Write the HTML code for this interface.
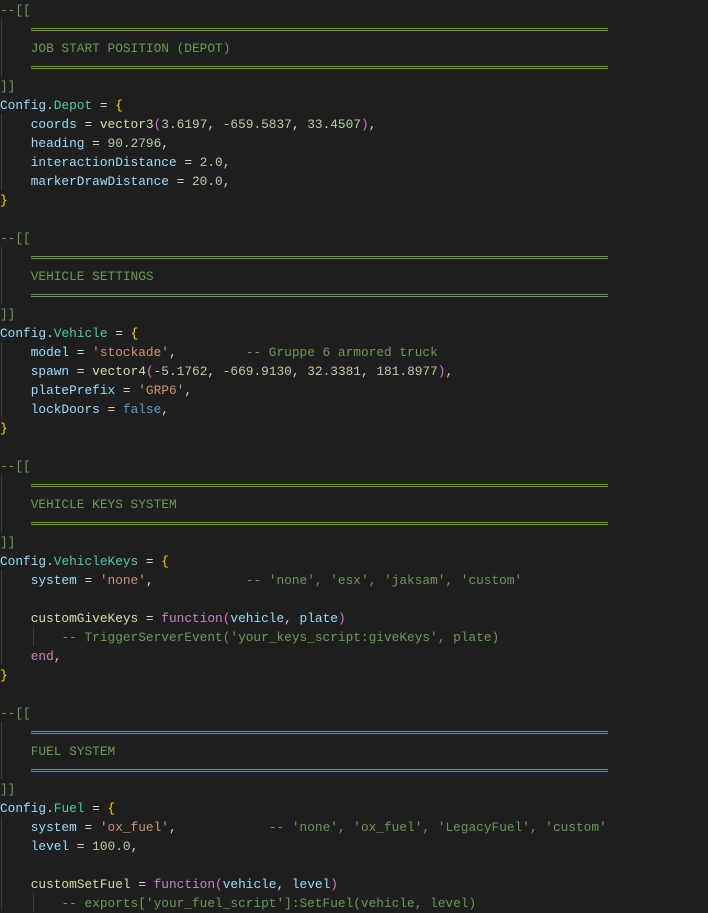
<!DOCTYPE html>
<html><head><meta charset="utf-8"><style>
body{margin:0;background:#1f1f1f;width:708px;height:909px;overflow:hidden;position:relative}
.c{position:absolute;top:0.5px;left:0;font-family:"Liberation Mono",monospace;font-size:12.8px;color:#d4d4d4}
.l{height:19px;line-height:19px;white-space:pre;position:relative}
.s{height:19px}
.h{position:absolute;left:31px;width:577px;height:1px;background:#6a9955}
.cm{color:#6a9955}.k{color:#9cdcfe}.t{color:#4ec9b0}.f{color:#dcdcaa}.n{color:#b5cea8}.st{color:#ce9178}.b{color:#569cd6}.p{color:#c586c0}.y{color:#ffd700}.pk{color:#da70d6}
.g{position:absolute;width:1px;background:#404040}
</style></head><body>
<div class="h" style="top:28px"></div><div class="h" style="top:30px"></div>
<div class="h" style="top:66px"></div><div class="h" style="top:68px"></div>
<div class="h" style="top:256px"></div><div class="h" style="top:258px"></div>
<div class="h" style="top:294px"></div><div class="h" style="top:296px"></div>
<div class="h" style="top:484px"></div><div class="h" style="top:486px"></div>
<div class="h" style="top:522px"></div><div class="h" style="top:524px"></div>
<div class="h" style="top:731px"></div><div class="h" style="top:733px"></div>
<div class="h" style="top:769px"></div><div class="h" style="top:771px"></div>
<div class="g" style="left:1px;top:19px;height:57px"></div>
<div class="g" style="left:1px;top:114px;height:76px"></div>
<div class="g" style="left:1px;top:247px;height:57px"></div>
<div class="g" style="left:1px;top:342px;height:76px"></div>
<div class="g" style="left:1px;top:475px;height:57px"></div>
<div class="g" style="left:1px;top:570px;height:95px"></div>
<div class="g" style="left:33px;top:627px;height:19px"></div>
<div class="g" style="left:1px;top:722px;height:57px"></div>
<div class="g" style="left:1px;top:817px;height:92px"></div>
<div class="g" style="left:33px;top:893px;height:19px"></div>
<div class="c">
<div class="l cm">--[[</div>
<div class="s"></div>
<div class="l cm">    JOB START POSITION (DEPOT)</div>
<div class="s"></div>
<div class="l cm">]]</div>
<div class="l"><span class="k">Config</span>.<span class="t">Depot</span> = <span class="y">{</span></div>
<div class="l">    <span class="k">coords</span> = <span class="f">vector3</span><span class="pk">(</span><span class="n">3.6197</span>, <span class="n">-659.5837</span>, <span class="n">33.4507</span><span class="pk">)</span>,</div>
<div class="l">    <span class="k">heading</span> = <span class="n">90.2796</span>,</div>
<div class="l">    <span class="k">interactionDistance</span> = <span class="n">2.0</span>,</div>
<div class="l">    <span class="k">markerDrawDistance</span> = <span class="n">20.0</span>,</div>
<div class="l"><span class="y">}</span></div>
<div class="l"> </div>
<div class="l cm">--[[</div>
<div class="s"></div>
<div class="l cm">    VEHICLE SETTINGS</div>
<div class="s"></div>
<div class="l cm">]]</div>
<div class="l"><span class="k">Config</span>.<span class="t">Vehicle</span> = <span class="y">{</span></div>
<div class="l">    <span class="k">model</span> = <span class="st">'stockade'</span>,         <span class="cm">-- Gruppe 6 armored truck</span></div>
<div class="l">    <span class="k">spawn</span> = <span class="f">vector4</span><span class="pk">(</span><span class="n">-5.1762</span>, <span class="n">-669.9130</span>, <span class="n">32.3381</span>, <span class="n">181.8977</span><span class="pk">)</span>,</div>
<div class="l">    <span class="k">platePrefix</span> = <span class="st">'GRP6'</span>,</div>
<div class="l">    <span class="k">lockDoors</span> = <span class="b">false</span>,</div>
<div class="l"><span class="y">}</span></div>
<div class="l"> </div>
<div class="l cm">--[[</div>
<div class="s"></div>
<div class="l cm">    VEHICLE KEYS SYSTEM</div>
<div class="s"></div>
<div class="l cm">]]</div>
<div class="l"><span class="k">Config</span>.<span class="t">VehicleKeys</span> = <span class="y">{</span></div>
<div class="l">    <span class="k">system</span> = <span class="st">'none'</span>,            <span class="cm">-- 'none', 'esx', 'jaksam', 'custom'</span></div>
<div class="l"> </div>
<div class="l">    <span class="f">customGiveKeys</span> = <span class="p">function</span><span class="pk">(</span><span class="k">vehicle</span>, <span class="k">plate</span><span class="pk">)</span></div>
<div class="l">        <span class="cm">-- TriggerServerEvent('your_keys_script:giveKeys', plate)</span></div>
<div class="l">    <span class="p">end</span>,</div>
<div class="l"><span class="y">}</span></div>
<div class="l"> </div>
<div class="l cm">--[[</div>
<div class="s"></div>
<div class="l cm">    FUEL SYSTEM</div>
<div class="s"></div>
<div class="l cm">]]</div>
<div class="l"><span class="k">Config</span>.<span class="t">Fuel</span> = <span class="y">{</span></div>
<div class="l">    <span class="k">system</span> = <span class="st">'ox_fuel'</span>,            <span class="cm">-- 'none', 'ox_fuel', 'LegacyFuel', 'custom'</span></div>
<div class="l">    <span class="k">level</span> = <span class="n">100.0</span>,</div>
<div class="l"> </div>
<div class="l">    <span class="f">customSetFuel</span> = <span class="p">function</span><span class="pk">(</span><span class="k">vehicle</span>, <span class="k">level</span><span class="pk">)</span></div>
<div class="l">        <span class="cm">-- exports['your_fuel_script']:SetFuel(vehicle, level)</span></div>
</div>
</body></html>
